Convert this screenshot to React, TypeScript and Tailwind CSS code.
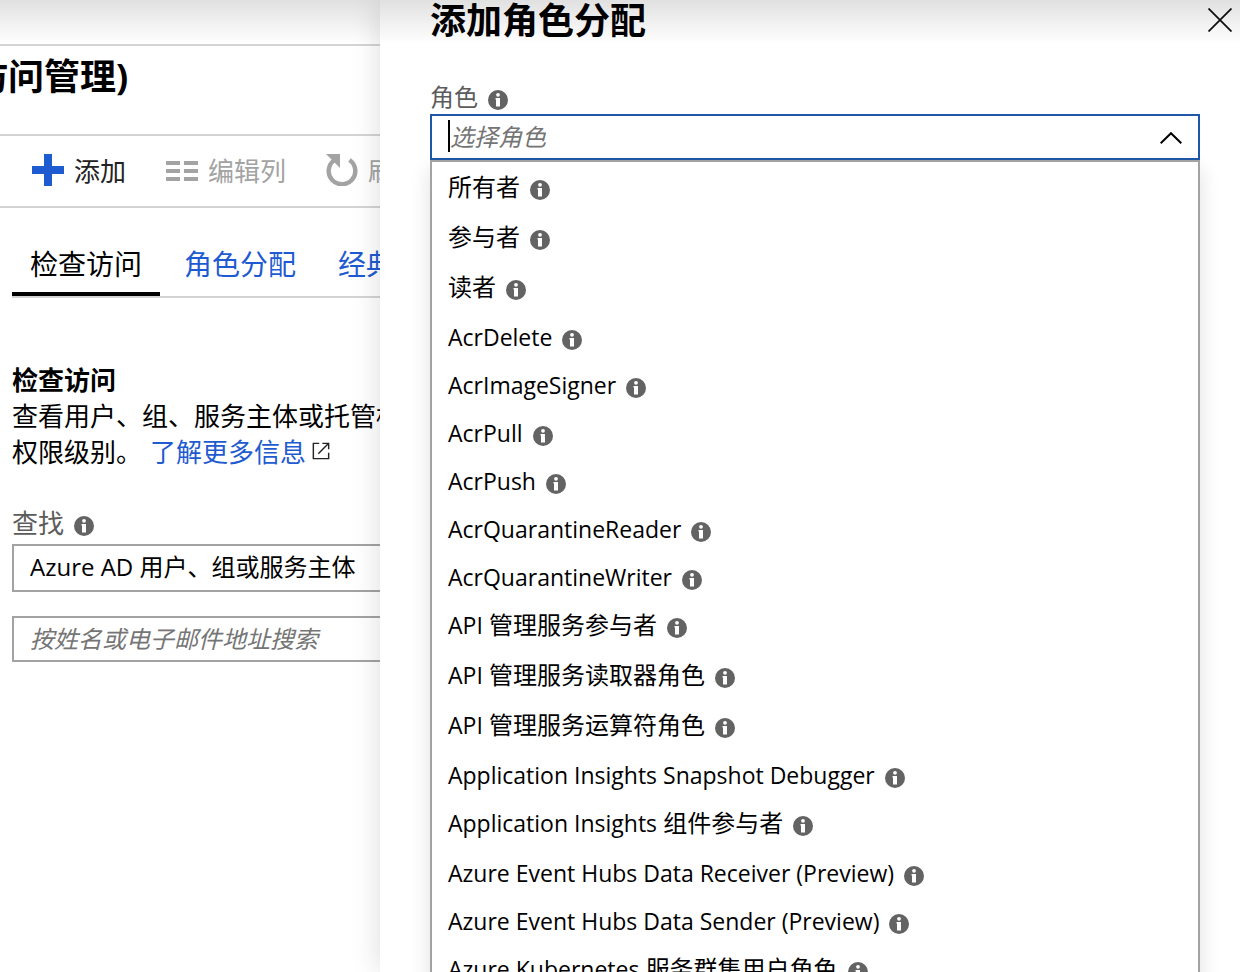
import React from "react";

type Role = { latin?: string; han?: string };

const roles: Role[] = [
  { han: "所有者" },
  { han: "参与者" },
  { han: "读者" },
  { latin: "AcrDelete" },
  { latin: "AcrImageSigner" },
  { latin: "AcrPull" },
  { latin: "AcrPush" },
  { latin: "AcrQuarantineReader" },
  { latin: "AcrQuarantineWriter" },
  { latin: "API", han: "管理服务参与者" },
  { latin: "API", han: "管理服务读取器角色" },
  { latin: "API", han: "管理服务运算符角色" },
  { latin: "Application Insights Snapshot Debugger" },
  { latin: "Application Insights", han: "组件参与者" },
  { latin: "Azure Event Hubs Data Receiver (Preview)" },
  { latin: "Azure Event Hubs Data Sender (Preview)" },
  { latin: "Azure Kubernetes", han: "服务群集用户角色" },
];

function InfoIcon() {
  return (
    <svg className="mt-1.5 size-5 shrink-0" viewBox="0 0 20 20" aria-hidden="true">
      <circle cx="10" cy="10" r="10" fill="#636363" />
      <circle cx="10" cy="4.8" r="1.9" fill="#fff" />
      <path d="M7.500 8H12v8.500H8V9.500h-.5z" fill="#fff" />
    </svg>
  );
}

function RoleOption({ role }: { role: Role }) {
  return (
    <li
      role="option"
      aria-selected={false}
      className={`flex items-center gap-2.5 px-4 text-2xl leading-9 ${role.han ? "h-[50px] pb-0.5" : "h-12"}`}
    >
      <span className="whitespace-nowrap">
        {role.latin && <span className="text-[23px]">{role.latin}</span>}
        {role.latin && role.han && " "}
        {role.han}
      </span>
      <InfoIcon />
    </li>
  );
}

function Toolbar() {
  return (
    <div className="flex h-[74px] shrink-0 items-center gap-10 border-y-2 border-[#d4d4d4] pl-8 text-[26px] whitespace-nowrap">
      <button type="button" className="flex shrink-0 items-center gap-2.5 text-[#222]">
        <svg className="mb-0.5 size-8" viewBox="0 0 32 32" aria-hidden="true">
          <path d="M12 0h8v12h12v8H20v12h-8V20H0v-8h12z" fill="#1f5bd0" />
        </svg>
        添加
      </button>
      <button type="button" disabled className="flex shrink-0 items-center gap-2.5 text-[#a3a3a3]">
        <svg className="h-[22px] w-8" viewBox="0 0 32 22" fill="#a3a3a3" aria-hidden="true">
          <path d="M0 1h14v4H0zM18 1h14v4H18zM0 9h14v4H0zM18 9h14v4H18zM0 17h14v4H0zM18 17h14v4H18z" />
        </svg>
        编辑列
      </button>
      <button type="button" disabled className="flex shrink-0 items-center gap-2.5 text-[#a3a3a3]">
        <svg className="mb-0.5 size-8" viewBox="0 0 32 32" aria-hidden="true">
          <path d="M8.500 6A13.300 13.300 0 1 0 23.500 6" fill="none" stroke="#a3a3a3" strokeWidth="4.4" />
          <path d="M0 0h14v14z" fill="#a3a3a3" />
        </svg>
        刷新
      </button>
    </div>
  );
}

function AccessPage() {
  return (
    <main className="flex w-[380px] shrink-0 flex-col overflow-hidden">
      <div className="h-11 shrink-0" />
      <header className="flex h-[90px] shrink-0 items-start border-t-2 border-[#d4d4d4] pt-1">
        <h1 className="-ml-7 text-4xl leading-[54px] font-bold whitespace-nowrap">访问管理)</h1>
      </header>
      <Toolbar />
      <div className="flex flex-col pl-3">
        <nav className="mt-6 flex h-[66px] border-b-2 border-[#d4d4d4] text-[28px] whitespace-nowrap">
          <a href="#check" aria-current="page" className="flex shrink-0 items-center border-b-4 border-black px-[18px] pt-1">
            检查访问
          </a>
          <a href="#roles" className="flex shrink-0 items-center border-b-4 border-transparent px-6 pt-1 text-[#1f5bd0]">
            角色分配
          </a>
          <a href="#classic" className="flex shrink-0 items-center border-b-4 border-transparent px-[18px] pt-1 text-[#1f5bd0]">
            经典管理员
          </a>
        </nav>
        <section className="mt-16 text-[26px] leading-9 whitespace-nowrap">
          <h2 className="font-bold">检查访问</h2>
          <p>查看用户、组、服务主体或托管标识</p>
          <p className="flex items-center">
            权限级别。
            <a href="#more" className="ml-2 flex items-center gap-1.5 text-[#1f5bd0]">
              了解更多信息
              <svg className="mb-0.5 size-[18px]" viewBox="0 0 20 20" fill="none" stroke="#222" strokeWidth="1.6" aria-hidden="true">
                <path d="M8 1.500H1.500v17h17V12M11.500 1.500h7V8M18.500 1.500L7 13" />
              </svg>
            </a>
          </p>
        </section>
        <label htmlFor="find" className="mt-8 flex h-[42px] items-center gap-2.5 text-[26px] text-[#5c5c5c]">
          查找
          <InfoIcon />
        </label>
        <select
          id="find"
          className="h-12 w-full appearance-none border-2 border-r-0 border-[#a3a3a3] bg-white px-4 pb-0.5 text-2xl leading-9"
        >
          <option>Azure AD 用户、组或服务主体</option>
        </select>
        <input
          type="text"
          aria-label="搜索"
          placeholder="按姓名或电子邮件地址搜索"
          className="mt-6 h-[46px] w-full border-2 border-r-0 border-[#a3a3a3] px-4 pb-0.5 text-2xl placeholder:text-[#757575] placeholder:italic"
        />
      </div>
    </main>
  );
}

function RolePanel() {
  return (
    <aside className="z-10 flex min-w-0 flex-1 flex-col bg-white pl-[50px] shadow-[0_0_28px_rgba(0,0,0,0.14)]">
      <div className="flex h-[42px] shrink-0 items-center justify-between pr-2">
        <h2 className="text-4xl font-bold">添加角色分配</h2>
        <button type="button" aria-label="关闭" className="pb-0.5">
          <svg className="size-6" viewBox="0 0 24 24" stroke="#111" strokeWidth="1.8" aria-hidden="true">
            <path d="M.5.5l23 23M23.500.5l-23 23" />
          </svg>
        </button>
      </div>
      <div className="mr-10 flex flex-col">
        <label htmlFor="role" className="mt-9 flex h-9 items-center gap-2.5 pt-0.5 text-2xl text-[#5c5c5c]">
          角色
          <InfoIcon />
        </label>
        <div className="flex h-[46px] items-center border-2 border-[#1f57a8] bg-white px-4">
          <span className="mb-0.5 h-8 w-0.5 bg-black" />
          <input
            id="role"
            type="text"
            role="combobox"
            aria-expanded="true"
            aria-controls="role-list"
            placeholder="选择角色"
            className="h-9 min-w-0 flex-1 pb-0.5 text-2xl outline-none placeholder:text-[#757575] placeholder:italic"
          />
          <svg className="mt-0.5 h-3 w-[22px]" viewBox="0 0 22 12" fill="none" stroke="#000" strokeWidth="2" aria-hidden="true">
            <path d="M.7 11.300L11 1.200l10.300 10.100" />
          </svg>
        </div>
        <ul
          id="role-list"
          role="listbox"
          aria-label="角色"
          className="border-2 border-[#a3a3a3] bg-white pt-px shadow-[0_8px_20px_rgba(0,0,0,0.12)]"
        >
          {roles.map((role, i) => (
            <RoleOption key={i} role={role} />
          ))}
        </ul>
      </div>
    </aside>
  );
}

export default function App() {
  return (
    <div
      lang="zh-CN"
      className="relative flex h-screen overflow-hidden bg-white font-['Open_Sans','Noto_Sans_CJK_SC',sans-serif] text-black"
    >
      <AccessPage />
      <RolePanel />
      <div className="pointer-events-none absolute inset-x-0 top-0 z-20 h-11 bg-linear-to-b from-black/12 to-transparent" />
    </div>
  );
}
